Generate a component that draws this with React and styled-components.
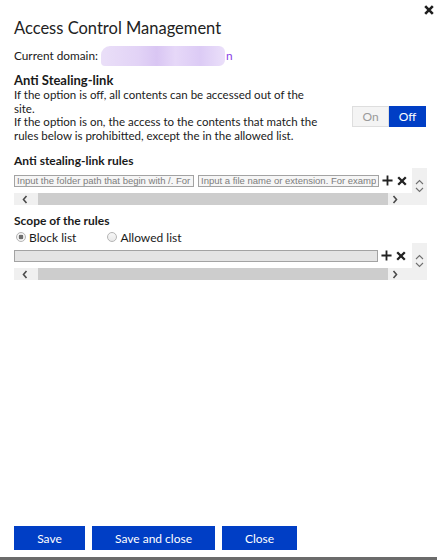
import React from 'react';
import styled, { createGlobalStyle } from 'styled-components';

const GlobalStyle = createGlobalStyle`
	html, body {
		margin: 0;
		padding: 0;
		background: #fff;
	}
	body {
		font-family: Lato, "Liberation Sans", sans-serif;
		color: #1a1a1a;
	}
`;

const Dialog = styled.div`
	display: flex;
	flex-direction: column;
	height: 557px;
	padding: 0 10px 0 14px;
	border-bottom: 3px solid #6b6b6b;
`;

const TopBar = styled.div`
	display: flex;
	justify-content: flex-end;
	height: 17px;
	padding-top: 5px;
	box-sizing: border-box;
	margin-right: -8px;
`;

const CloseButton = styled.button`
	width: 11px;
	height: 10px;
	padding: 0;
	border: none;
	background: none;
	display: flex;
	cursor: pointer;
`;

const Title = styled.h1`
	margin: 0;
	font-size: 16.5px;
	font-weight: 400;
	line-height: 22px;
	color: #222;
`;

const DomainRow = styled.div`
	display: flex;
	align-items: center;
	height: 21px;
	margin-top: 6px;
	font-size: 11.8px;
`;

const DomainBlur = styled.span`
	display: inline-block;
	width: 124px;
	height: 20px;
	margin-left: 3px;
	border-radius: 9px 6px 6px 4px;
	background: linear-gradient(90deg, #eadff8 0%, #e2d3f6 30%, #d9c6f3 45%, #e6d8f8 60%, #dccbf5 80%, #ebe0fa 100%);
	filter: blur(0.6px);
`;

const DomainTail = styled.span`
	color: #8a3ee6;
	margin-left: 1px;
`;

const OptionRow = styled.div`
	display: flex;
	justify-content: space-between;
	align-items: flex-start;
	margin-top: 7px;
`;

const SectionTitle = styled.div`
	font-size: 13px;
	font-weight: 700;
	line-height: 15px;
`;

const Description = styled.p`
	margin: 0;
	font-size: 11.5px;
	line-height: 13.5px;
`;

const Toggle = styled.div`
	display: flex;
	margin-top: 33px;
	margin-right: 1px;
`;

const ToggleButton = styled.button`
	width: 37px;
	height: 21px;
	padding: 0;
	font-family: inherit;
	font-size: 12px;
	border: 1px solid ${(p) => (p.$active ? '#003ec5' : '#dedede')};
	background: ${(p) => (p.$active ? '#003ec5' : '#f4f4f4')};
	color: ${(p) => (p.$active ? '#fff' : '#9a9a9a')};
	cursor: pointer;
`;

const Label = styled.div`
	font-size: 12px;
	font-weight: 700;
	line-height: 15px;
	margin-top: ${(p) => p.$top}px;
`;

const ScrollBox = styled.div`
	display: grid;
	grid-template-columns: 1fr 15px;
	grid-template-rows: 25px 12px;
`;

const RuleRow = styled.div`
	display: flex;
	align-items: center;
	gap: 4px;
	overflow: hidden;
`;

const TextInput = styled.input`
	box-sizing: border-box;
	width: ${(p) => p.$width}px;
	height: 12px;
	padding: 0 2px;
	border: 1px solid #a3a3a3;
	background: ${(p) => (p.disabled ? '#e4e4e4' : '#f6f6f6')};
	font-family: "Liberation Sans", Arial, sans-serif;
	font-size: 9.5px;
	color: #333;
	outline: none;

	&::placeholder {
		color: #7d7d7d;
	}
`;

const RowActions = styled.div`
	display: flex;
	align-items: center;
	gap: 4px;
	margin-left: -1px;
`;

const IconButton = styled.button`
	display: flex;
	padding: 0;
	border: none;
	background: none;
	cursor: pointer;
`;

const VScroll = styled.div`
	display: flex;
	flex-direction: column;
	align-items: center;
	gap: 2px;
	padding-top: 11px;
	background: #f0f0f0;
`;

const HScroll = styled.div`
	display: flex;
	align-items: center;
	background: #f0f0f0;
`;

const ScrollArrow = styled.div`
	display: flex;
	justify-content: ${(p) => (p.$side === 'left' ? 'flex-end' : 'flex-start')};
	width: 24px;
	padding: ${(p) => (p.$side === 'left' ? '0 10px 0 0' : '0 0 0 4px')};
	box-sizing: border-box;
`;

const Thumb = styled.div`
	flex: 1;
	height: 12px;
	background: #cdcdcd;
`;

const Corner = styled.div`
	background: #f0f0f0;
`;

const RadioGroup = styled.div`
	display: flex;
	gap: 31px;
	margin-top: 3px;
	padding-left: 2px;
	height: 12px;
	align-items: center;
`;

const RadioLabel = styled.label`
	display: flex;
	align-items: center;
	gap: 3px;
	font-size: 12px;
	cursor: pointer;
`;

const RadioDot = styled.span`
	box-sizing: border-box;
	width: 10px;
	height: 10px;
	border-radius: 50%;
	border: 1px solid #b5b5b5;
	background: ${(p) =>
		p.$checked
			? 'radial-gradient(circle, #6e6e6e 0 2.2px, #f2f2f2 2.6px)'
			: 'linear-gradient(#f7f7f7, #e9e9e9)'};
`;

const Footer = styled.div`
	display: flex;
	gap: 7px;
	margin-top: auto;
	padding-bottom: 7px;
`;

const ActionButton = styled.button`
	width: ${(p) => p.$width}px;
	height: 24px;
	padding: 0;
	border: none;
	background: #003ec5;
	color: #fff;
	font-family: inherit;
	font-size: 12px;
	cursor: pointer;
`;

const CrossIcon = ({ size = 10, weight = 2.4, color = '#222' }) => (
	<svg width={size} height={size} viewBox="0 0 10 10">
		<path d="M1.2 1.2 L8.8 8.8 M8.8 1.2 L1.2 8.8" stroke={color} strokeWidth={weight} />
	</svg>
);

const PlusIcon = () => (
	<svg width="11" height="11" viewBox="0 0 12 12">
		<path d="M6 0.5 V11.5 M0.5 6 H11.5" stroke="#222" strokeWidth="2" />
	</svg>
);

const Chevron = ({ dir }) => {
	const paths = {
		up: 'M1 5 L4.5 1.5 L8 5',
		down: 'M1 1 L4.5 4.5 L8 1',
		left: 'M4.5 1 L1.5 4.5 L4.5 8',
		right: 'M1.5 1 L4.5 4.5 L1.5 8',
	};
	const vertical = dir === 'up' || dir === 'down';
	return (
		<svg width={vertical ? 9 : 6} height={vertical ? 6 : 9} viewBox={vertical ? '0 0 9 6' : '0 0 6 9'}>
			<path d={paths[dir]} fill="none" stroke={vertical ? '#707070' : '#4a4a4a'} strokeWidth={vertical ? 1.1 : 1.6} />
		</svg>
	);
};

// fake scroll frame, as the old dialog draws it
const RuleBox = ({ children }) => (
	<ScrollBox>
		<RuleRow>{children}</RuleRow>
		<VScroll>
			<Chevron dir="up" />
			<Chevron dir="down" />
		</VScroll>
		<HScroll>
			<ScrollArrow $side="left">
				<Chevron dir="left" />
			</ScrollArrow>
			<Thumb />
			<ScrollArrow $side="right">
				<Chevron dir="right" />
			</ScrollArrow>
		</HScroll>
		<Corner />
	</ScrollBox>
);

const Actions = () => (
	<RowActions>
		<IconButton aria-label="Add">
			<PlusIcon />
		</IconButton>
		<IconButton aria-label="Remove">
			<CrossIcon size={10} weight={2.3} />
		</IconButton>
	</RowActions>
);

const App = () => {
	return (
		<>
			<GlobalStyle />
			<Dialog>
				<TopBar>
					<CloseButton aria-label="Close dialog">
						<CrossIcon size={10} weight={2.6} color="#1e1e1e" />
					</CloseButton>
				</TopBar>
				<Title>Access Control Management</Title>
				<DomainRow>
					Current domain:
					<DomainBlur />
					<DomainTail>n</DomainTail>
				</DomainRow>

				<OptionRow>
					<div>
						<SectionTitle>Anti Stealing-link</SectionTitle>
						<Description>
							If the option is off, all contents can be accessed out of the
							<br />
							site.
							<br />
							If the option is on, the access to the contents that match the
							<br />
							rules below is prohibitted, except the in the allowed list.
						</Description>
					</div>
					<Toggle>
						<ToggleButton>On</ToggleButton>
						<ToggleButton $active>Off</ToggleButton>
					</Toggle>
				</OptionRow>

				<Label $top={11}>Anti stealing-link rules</Label>
				<RuleBox>
					<TextInput $width={180} placeholder="Input the folder path that begin with /. For example /images" />
					<TextInput $width={181} placeholder="Input a file name or extension. For example *.jpg" />
					<Actions />
				</RuleBox>

				<Label $top={8}>Scope of the rules</Label>
				<RadioGroup>
					<RadioLabel>
						<RadioDot $checked />
						Block list
					</RadioLabel>
					<RadioLabel>
						<RadioDot />
						Allowed list
					</RadioLabel>
				</RadioGroup>
				<RuleBox>
					<TextInput $width={364} disabled />
					<Actions />
				</RuleBox>

				<Footer>
					<ActionButton $width={71}>Save</ActionButton>
					<ActionButton $width={123}>Save and close</ActionButton>
					<ActionButton $width={75}>Close</ActionButton>
				</Footer>
			</Dialog>
		</>
	);
};

export default App;
